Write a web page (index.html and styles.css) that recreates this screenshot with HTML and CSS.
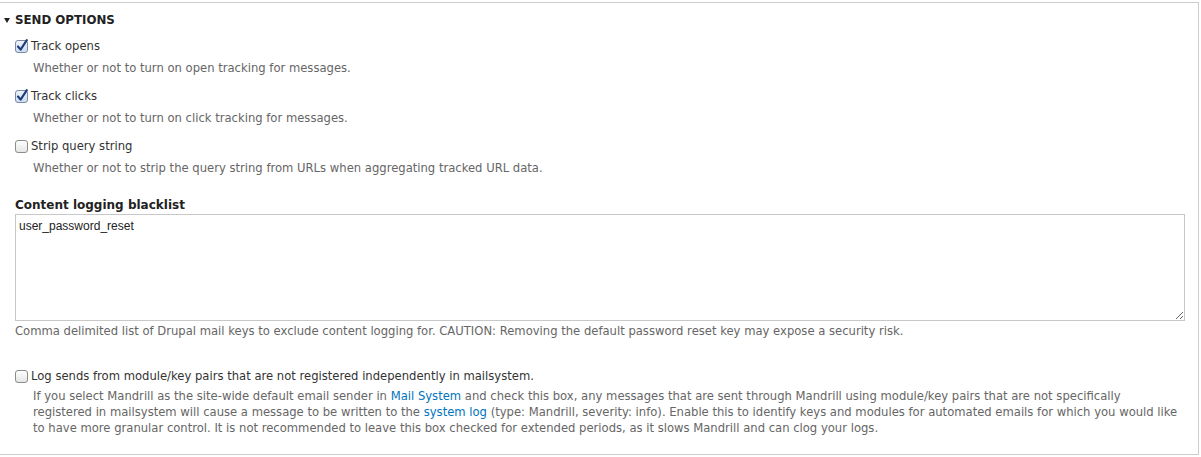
FILE: index.html
```html
<!DOCTYPE html>
<html lang="en">
<head>
<meta charset="utf-8">
<title>Send options</title>
<link rel="stylesheet" href="styles.css">
</head>
<body>
<div class="fieldset">
  <div class="legend"><span class="arrow"></span><span class="legend-text">Send options</span></div>

  <div class="form-item">
    <div class="check-row">
      <svg class="cb" width="14" height="14" viewBox="0 0 14 14"><defs><linearGradient id="g1" x1="0" y1="0" x2="0" y2="1"><stop offset="0" stop-color="#eef4fb"/><stop offset="1" stop-color="#c9dcf2"/></linearGradient></defs><rect x="0.5" y="1.5" width="12" height="12" rx="2.5" fill="url(#g1)" stroke="#7d8aa0"/><path d="M3 7.5 L5.6 10.6 L11.8 1.2" fill="none" stroke="#1d3a7a" stroke-width="2.1" stroke-linecap="round" stroke-linejoin="round"/></svg>
      <span class="label">Track opens</span>
    </div>
    <div class="desc">Whether or not to turn on open tracking for messages.</div>
  </div>

  <div class="form-item">
    <div class="check-row">
      <svg class="cb" width="14" height="14" viewBox="0 0 14 14"><defs><linearGradient id="g2" x1="0" y1="0" x2="0" y2="1"><stop offset="0" stop-color="#eef4fb"/><stop offset="1" stop-color="#c9dcf2"/></linearGradient></defs><rect x="0.5" y="1.5" width="12" height="12" rx="2.5" fill="url(#g2)" stroke="#7d8aa0"/><path d="M3 7.5 L5.6 10.6 L11.8 1.2" fill="none" stroke="#1d3a7a" stroke-width="2.1" stroke-linecap="round" stroke-linejoin="round"/></svg>
      <span class="label">Track clicks</span>
    </div>
    <div class="desc">Whether or not to turn on click tracking for messages.</div>
  </div>

  <div class="form-item">
    <div class="check-row">
      <svg class="cb" width="14" height="14" viewBox="0 0 14 14"><defs><linearGradient id="g3" x1="0" y1="0" x2="0" y2="1"><stop offset="0" stop-color="#ffffff"/><stop offset="1" stop-color="#e4e4e4"/></linearGradient></defs><rect x="0.5" y="1.5" width="12" height="12" rx="2.5" fill="url(#g3)" stroke="#8c8c8c"/></svg>
      <span class="label">Strip query string</span>
    </div>
    <div class="desc">Whether or not to strip the query string from URLs when aggregating tracked URL data.</div>
  </div>

  <div class="form-item textarea-item">
    <div class="field-label">Content logging blacklist</div>
    <textarea class="textarea" readonly>user_password_reset</textarea>
    <div class="desc desc-flush">Comma delimited list of Drupal mail keys to exclude content logging for. CAUTION: Removing the default password reset key may expose a security risk.</div>
  </div>

  <div class="form-item log-item">
    <div class="check-row">
      <svg class="cb" width="14" height="14" viewBox="0 0 14 14"><defs><linearGradient id="g4" x1="0" y1="0" x2="0" y2="1"><stop offset="0" stop-color="#ffffff"/><stop offset="1" stop-color="#e4e4e4"/></linearGradient></defs><rect x="0.5" y="1.5" width="12" height="12" rx="2.5" fill="url(#g4)" stroke="#8c8c8c"/></svg>
      <span class="label">Log sends from module/key pairs that are not registered independently in mailsystem.</span>
    </div>
    <div class="desc desc-tight">If you select Mandrill as the site-wide default email sender in <a href="#" class="link">Mail System</a> and check this box, any messages that are sent through Mandrill using module/key pairs that are not specifically<br>registered in mailsystem will cause a message to be written to the <a href="#" class="link">system log</a> (type: Mandrill, severity: info). Enable this to identify keys and modules for automated emails for which you would like<br>to have more granular control. It is not recommended to leave this box checked for extended periods, as it slows Mandrill and can clog your logs.</div>
  </div>
</div>
</body>
</html>
```
FILE: styles.css
```css
html, body {
  margin: 0;
  padding: 0;
  background: #fff;
}
body {
  font-family: "DejaVu Sans", sans-serif;
  font-size: 11.6px;
  color: #333;
}
.fieldset {
  margin-top: 2px;
  width: 1199px;
  height: 453px;
  box-sizing: border-box;
  border: 1px solid #cccccc;
  border-left: 0;
  padding: 8px 0 0 0;
  display: flex;
  flex-direction: column;
}
.legend {
  display: flex;
  align-items: center;
  height: 18px;
  line-height: 18px;
  padding-left: 4px;
  margin-bottom: 8px;
}
.arrow {
  width: 0;
  height: 0;
  border-left: 3.5px solid transparent;
  border-right: 3.5px solid transparent;
  border-top: 5px solid #222;
  margin-right: 5px;
  margin-top: 1px;
}
.legend-text {
  font-weight: bold;
  font-size: 11.8px;
  text-transform: uppercase;
  color: #222;
}
.form-item {
  padding-left: 15px;
  margin-bottom: 11px;
}
.check-row {
  display: flex;
  align-items: center;
  height: 18px;
  line-height: 18px;
}
.cb {
  display: block;
  margin-right: 2px;
  margin-top: -1px;
}
.label {
  color: #333;
  white-space: nowrap;
}
.desc {
  color: #666;
  line-height: 16px;
  margin-top: 5px;
  padding-left: 18px;
  white-space: nowrap;
}
.desc-flush {
  padding-left: 0;
  margin-top: 2px;
}
.desc-tight {
  margin-top: 3px;
}
.textarea-item {
  margin-top: 9px;
  margin-bottom: 28px;
}
.field-label {
  font-weight: bold;
  font-size: 12px;
  line-height: 18px;
  color: #222;
}
.textarea {
  display: block;
  box-sizing: border-box;
  width: 1170px;
  height: 107px;
  margin: 0;
  border: 1px solid #c8c8c8;
  padding: 4px 3px;
  font-family: "Liberation Sans", Arial, sans-serif;
  font-size: 12px;
  line-height: 15px;
  color: #222;
  resize: vertical;
  outline: none;
}
.link {
  color: #0074bd;
  text-decoration: none;
}
```
